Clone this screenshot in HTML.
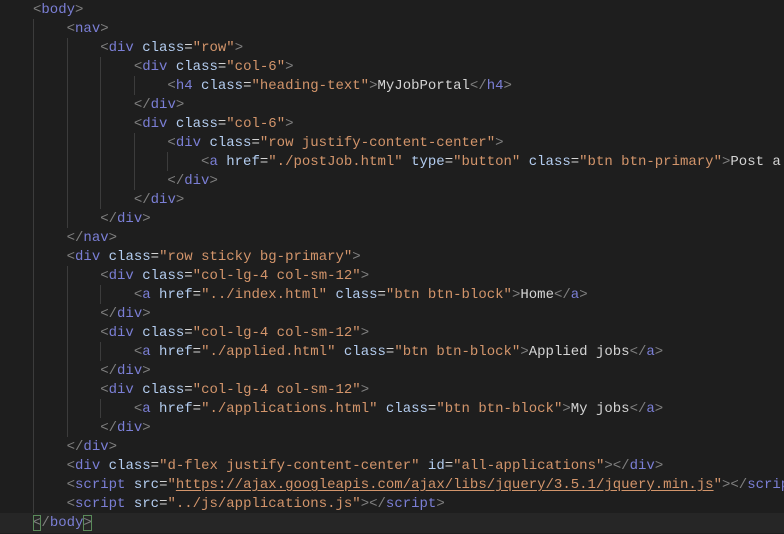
<!DOCTYPE html>
<html><head><meta charset="utf-8"><style>
html,body{margin:0;padding:0;background:#1e1e1e;width:784px;height:534px;overflow:hidden}
#c{position:relative;width:784px;height:534px;font-family:"Liberation Mono",monospace;font-size:14px;color:#d4d4d4}
.l{position:absolute;left:33px;height:19px;line-height:19px;white-space:pre;margin-top:1px}
.b{color:#808080}.t{color:#7b7fd6}.a{color:#b4cdf0}.s{color:#d3956b}
.g{position:absolute;width:1px;background:#3c3c3c}
.u{text-decoration:underline;text-underline-offset:2px}
.hl{position:absolute;left:0;top:513px;width:784px;height:20px;background:#262626}
.bx{outline:1px solid #5a8a5a;outline-offset:-1px}
</style></head><body><div id="c">
<div class="hl"></div>
<div class="g" style="left:33px;top:19px;height:494px"></div>
<div class="g" style="left:67px;top:38px;height:190px"></div>
<div class="g" style="left:67px;top:266px;height:171px"></div>
<div class="g" style="left:100px;top:57px;height:152px"></div>
<div class="g" style="left:100px;top:285px;height:19px"></div>
<div class="g" style="left:100px;top:342px;height:19px"></div>
<div class="g" style="left:100px;top:399px;height:19px"></div>
<div class="g" style="left:134px;top:76px;height:19px"></div>
<div class="g" style="left:134px;top:133px;height:57px"></div>
<div class="g" style="left:167px;top:152px;height:19px"></div>

<div class="l" style="top:0"><span class="b">&lt;</span><span class="t">body</span><span class="b">&gt;</span></div>
<div class="l" style="top:19px">    <span class="b">&lt;</span><span class="t">nav</span><span class="b">&gt;</span></div>
<div class="l" style="top:38px">        <span class="b">&lt;</span><span class="t">div</span> <span class="a">class</span>=<span class="s">"row"</span><span class="b">&gt;</span></div>
<div class="l" style="top:57px">            <span class="b">&lt;</span><span class="t">div</span> <span class="a">class</span>=<span class="s">"col-6"</span><span class="b">&gt;</span></div>
<div class="l" style="top:76px">                <span class="b">&lt;</span><span class="t">h4</span> <span class="a">class</span>=<span class="s">"heading-text"</span><span class="b">&gt;</span>MyJobPortal<span class="b">&lt;/</span><span class="t">h4</span><span class="b">&gt;</span></div>
<div class="l" style="top:95px">            <span class="b">&lt;/</span><span class="t">div</span><span class="b">&gt;</span></div>
<div class="l" style="top:114px">            <span class="b">&lt;</span><span class="t">div</span> <span class="a">class</span>=<span class="s">"col-6"</span><span class="b">&gt;</span></div>
<div class="l" style="top:133px">                <span class="b">&lt;</span><span class="t">div</span> <span class="a">class</span>=<span class="s">"row justify-content-center"</span><span class="b">&gt;</span></div>
<div class="l" style="top:152px">                    <span class="b">&lt;</span><span class="t">a</span> <span class="a">href</span>=<span class="s">"./postJob.html"</span> <span class="a">type</span>=<span class="s">"button"</span> <span class="a">class</span>=<span class="s">"btn btn-primary"</span><span class="b">&gt;</span>Post a</div>
<div class="l" style="top:171px">                <span class="b">&lt;/</span><span class="t">div</span><span class="b">&gt;</span></div>
<div class="l" style="top:190px">            <span class="b">&lt;/</span><span class="t">div</span><span class="b">&gt;</span></div>
<div class="l" style="top:209px">        <span class="b">&lt;/</span><span class="t">div</span><span class="b">&gt;</span></div>
<div class="l" style="top:228px">    <span class="b">&lt;/</span><span class="t">nav</span><span class="b">&gt;</span></div>
<div class="l" style="top:247px">    <span class="b">&lt;</span><span class="t">div</span> <span class="a">class</span>=<span class="s">"row sticky bg-primary"</span><span class="b">&gt;</span></div>
<div class="l" style="top:266px">        <span class="b">&lt;</span><span class="t">div</span> <span class="a">class</span>=<span class="s">"col-lg-4 col-sm-12"</span><span class="b">&gt;</span></div>
<div class="l" style="top:285px">            <span class="b">&lt;</span><span class="t">a</span> <span class="a">href</span>=<span class="s">"../index.html"</span> <span class="a">class</span>=<span class="s">"btn btn-block"</span><span class="b">&gt;</span>Home<span class="b">&lt;/</span><span class="t">a</span><span class="b">&gt;</span></div>
<div class="l" style="top:304px">        <span class="b">&lt;/</span><span class="t">div</span><span class="b">&gt;</span></div>
<div class="l" style="top:323px">        <span class="b">&lt;</span><span class="t">div</span> <span class="a">class</span>=<span class="s">"col-lg-4 col-sm-12"</span><span class="b">&gt;</span></div>
<div class="l" style="top:342px">            <span class="b">&lt;</span><span class="t">a</span> <span class="a">href</span>=<span class="s">"./applied.html"</span> <span class="a">class</span>=<span class="s">"btn btn-block"</span><span class="b">&gt;</span>Applied jobs<span class="b">&lt;/</span><span class="t">a</span><span class="b">&gt;</span></div>
<div class="l" style="top:361px">        <span class="b">&lt;/</span><span class="t">div</span><span class="b">&gt;</span></div>
<div class="l" style="top:380px">        <span class="b">&lt;</span><span class="t">div</span> <span class="a">class</span>=<span class="s">"col-lg-4 col-sm-12"</span><span class="b">&gt;</span></div>
<div class="l" style="top:399px">            <span class="b">&lt;</span><span class="t">a</span> <span class="a">href</span>=<span class="s">"./applications.html"</span> <span class="a">class</span>=<span class="s">"btn btn-block"</span><span class="b">&gt;</span>My jobs<span class="b">&lt;/</span><span class="t">a</span><span class="b">&gt;</span></div>
<div class="l" style="top:418px">        <span class="b">&lt;/</span><span class="t">div</span><span class="b">&gt;</span></div>
<div class="l" style="top:437px">    <span class="b">&lt;/</span><span class="t">div</span><span class="b">&gt;</span></div>
<div class="l" style="top:456px">    <span class="b">&lt;</span><span class="t">div</span> <span class="a">class</span>=<span class="s">"d-flex justify-content-center"</span> <span class="a">id</span>=<span class="s">"all-applications"</span><span class="b">&gt;&lt;/</span><span class="t">div</span><span class="b">&gt;</span></div>
<div class="l" style="top:475px">    <span class="b">&lt;</span><span class="t">script</span> <span class="a">src</span>=<span class="s">"<span class="u">https://ajax.googleapis.com/ajax/libs/jquery/3.5.1/jquery.min.js</span>"</span><span class="b">&gt;&lt;/</span><span class="t">script</span><span class="b">&gt;</span></div>
<div class="l" style="top:494px">    <span class="b">&lt;</span><span class="t">script</span> <span class="a">src</span>=<span class="s">"../js/applications.js"</span><span class="b">&gt;&lt;/</span><span class="t">script</span><span class="b">&gt;</span></div>
<div class="l" style="top:513px"><span class="b bx">&lt;</span><span class="b">/</span><span class="t">body</span><span class="b bx">&gt;</span></div>
</div></body></html>
